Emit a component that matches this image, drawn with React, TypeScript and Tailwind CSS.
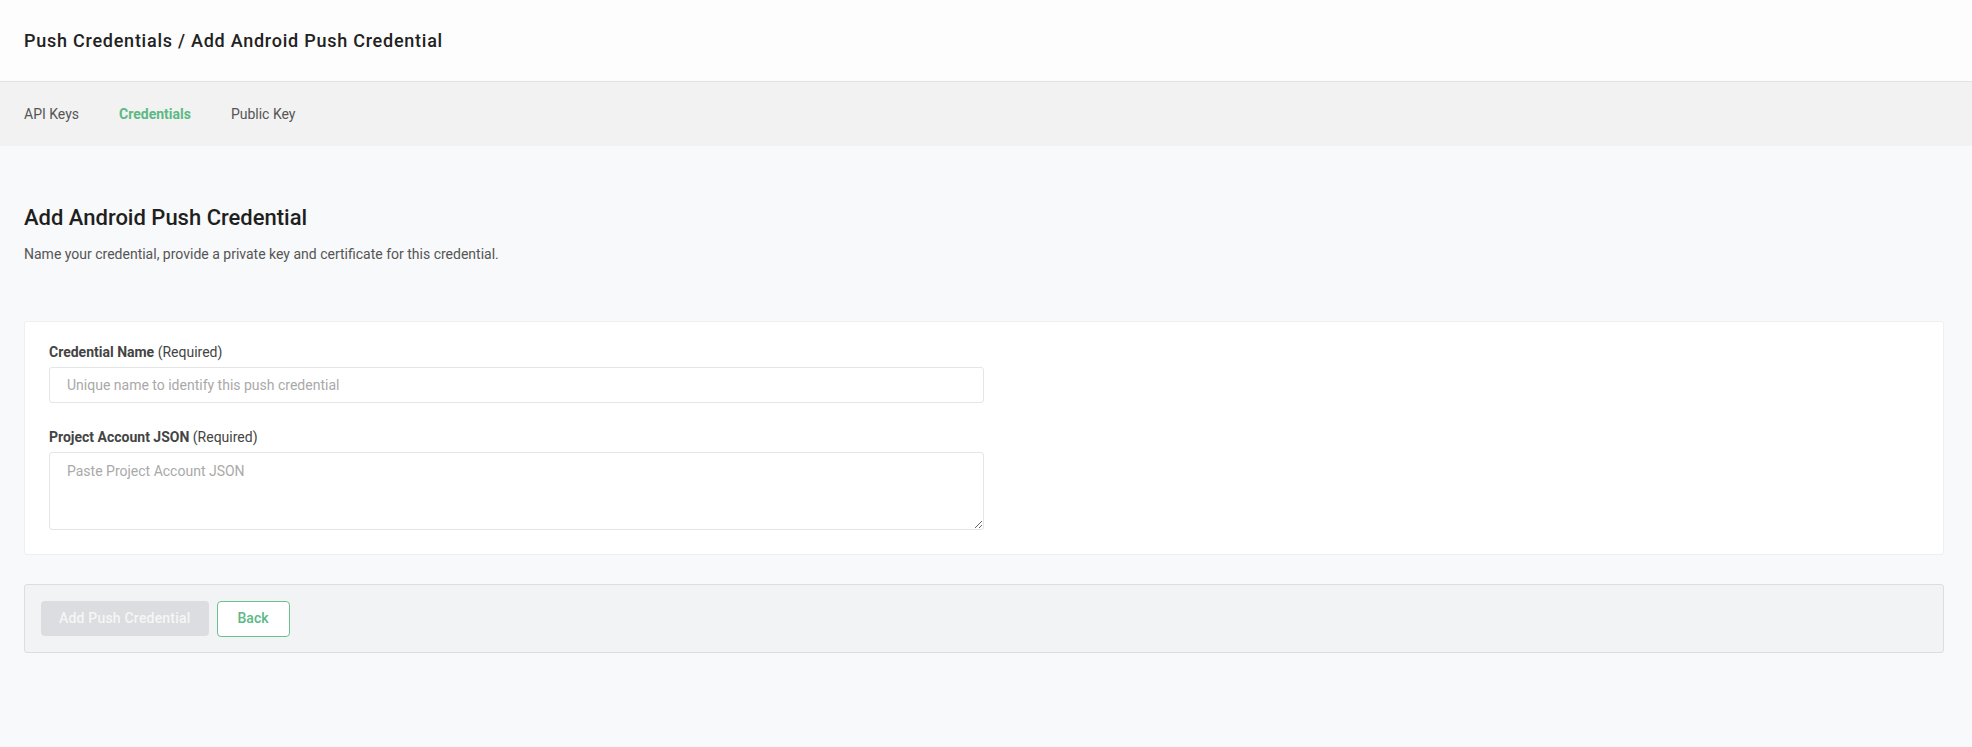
export default function App() {
  const tabs = [
    { label: 'API Keys', active: false },
    { label: 'Credentials', active: true },
    { label: 'Public Key', active: false },
  ];

  return (
    <div className="min-h-[747px] bg-[#f8f9fa] font-['Roboto',sans-serif] text-[#333]">
      <header className="h-[82px] flex items-center px-6 bg-[#fdfdfd] border-b border-[#e2e2e2]">
        <h1 className="text-[18px] font-medium tracking-[0.75px] text-[#222]">
          Push Credentials / Add Android Push Credential
        </h1>
      </header>

      <nav className="h-[64px] flex items-center gap-10 px-6 bg-[#f2f2f2]">
        {tabs.map((t) => (
          <span
            key={t.label}
            className={
              t.active
                ? 'text-[14px] font-bold text-[#5bb985]'
                : 'text-[14px] text-[#555]'
            }
          >
            {t.label}
          </span>
        ))}
      </nav>

      <main className="pl-6 pr-[28px] pt-[58px]">
        <h2 className="text-[22px] font-medium text-[#1f1f1f] leading-7">Add Android Push Credential</h2>
        <p className="mt-[12px] text-[14px] text-[#555]">
          Name your credential, provide a private key and certificate for this credential.
        </p>

        <section className="mt-[56px] bg-white border border-[#eeeff0] rounded-[3px] px-6 pt-[20px] pb-[24px]">
          <label className="block text-[14px] text-[#444]">
            <span className="font-bold">Credential Name</span> (Required)
          </label>
          <input
            className="mt-[4px] w-[935px] h-[36px] px-[17px] text-[14px] border border-[#e4e5e7] rounded-[3px] placeholder:text-[#a9a9a9] outline-none"
            placeholder="Unique name to identify this push credential"
          />

          <label className="block mt-[24px] text-[14px] text-[#444]">
            <span className="font-bold">Project Account JSON</span> (Required)
          </label>
          <textarea
            className="mt-[4px] block w-[935px] h-[78px] px-[17px] py-[8px] text-[14px] border border-[#e4e5e7] rounded-[3px] placeholder:text-[#a9a9a9] outline-none"
            placeholder="Paste Project Account JSON"
          />
        </section>

        <div className="mt-[29px] flex items-center gap-[8px] px-[16px] h-[69px] bg-[#f2f3f4] border border-[#dcdddf] rounded-[3px]">
          <button className="h-[35px] px-[18px] rounded-[4px] bg-[#dcdde0] text-[14px] font-medium tracking-[0.2px] text-[#f6f6f6]">
            Add Push Credential
          </button>
          <button className="h-[36px] px-[20px] rounded-[4px] bg-white border border-[#6dbf8d] text-[14px] font-medium text-[#5bb985]">
            Back
          </button>
        </div>
      </main>
    </div>
  );
}
